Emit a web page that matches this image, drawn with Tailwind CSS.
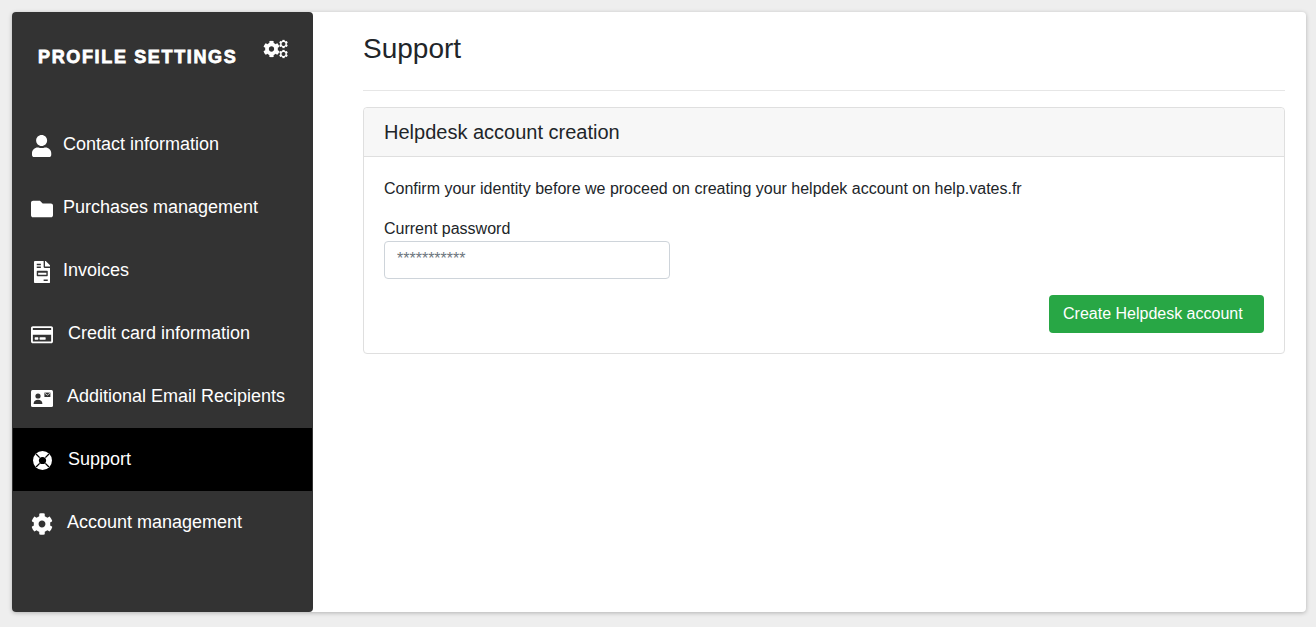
<!DOCTYPE html>
<html lang="en">
<head>
    <meta charset="UTF-8">
    <meta name="viewport" content="width=device-width, initial-scale=1.0">
    <title>Profile settings - Support</title>
    <script src="https://cdn.jsdelivr.net/npm/@tailwindcss/browser@4"></script>
</head>
<body class="bg-[#eeeeee] font-['Liberation_Sans',Arial,sans-serif] text-[#212529] h-[627px] overflow-hidden">

    <svg class="hidden" aria-hidden="true">
        <symbol id="cog" viewBox="0 0 512 512">
            <path fill="currentColor" d="M487.4 315.7l-42.6-24.6c4.3-23.2 4.3-47 0-70.2l42.6-24.6c4.9-2.8 7.1-8.6 5.5-14-11.1-35.6-30-67.8-54.7-94.6-3.8-4.1-10-5.1-14.8-2.3L380.8 110c-17.9-15.4-38.5-27.3-60.8-35.1V25.8c0-5.6-3.9-10.5-9.4-11.7-36.7-8.2-74.3-7.8-109.2 0-5.5 1.2-9.4 6.1-9.4 11.7V75c-22.2 7.9-42.8 19.8-60.8 35.1L88.7 85.5c-4.9-2.8-11-1.9-14.8 2.3-24.7 26.7-43.6 58.9-54.7 94.6-1.7 5.4.6 11.2 5.5 14L67.3 221c-4.3 23.2-4.3 47 0 70.2l-42.6 24.6c-4.9 2.8-7.1 8.6-5.5 14 11.1 35.6 30 67.8 54.7 94.6 3.8 4.1 10 5.1 14.8 2.3l42.6-24.6c17.9 15.4 38.5 27.3 60.8 35.1v49.2c0 5.6 3.9 10.5 9.4 11.7 36.7 8.2 74.3 7.8 109.2 0 5.5-1.2 9.4-6.1 9.4-11.7v-49.2c22.2-7.9 42.8-19.8 60.8-35.1l42.6 24.6c4.9 2.8 11 1.9 14.8-2.3 24.7-26.7 43.6-58.9 54.7-94.6 1.5-5.5-.7-11.3-5.6-14.1zM256 336c-44.1 0-80-35.9-80-80s35.9-80 80-80 80 35.9 80 80-35.9 80-80 80z"/>
        </symbol>
    </svg>

    <div class="p-3 h-[627px]">
        <div class="flex h-[600px] w-[1294px] bg-white rounded shadow-[0_1px_4px_rgba(0,0,0,0.25)]">

            <!-- sidebar -->
            <aside class="w-[301px] shrink-0 bg-[#333333] rounded text-white">
                <div class="h-[101px] flex items-start">
                    <h2 class="ml-[26px] mt-[34px] text-[18px] leading-[22px] font-bold tracking-[1.65px] whitespace-nowrap [-webkit-text-stroke:0.8px_white]">PROFILE SETTINGS</h2>
                    <svg class="ml-[26px] mt-[27px] w-[25px] h-[20px]" viewBox="0 0 25 20">
                        <use href="#cog" x="0" y="1.5" width="17" height="17"/>
                        <use href="#cog" x="16" y="0.5" width="9" height="9"/>
                        <circle cx="20.5" cy="5" r="2" fill="#333333"/>
                        <use href="#cog" x="16" y="10.5" width="9" height="9"/>
                        <circle cx="20.5" cy="15" r="2" fill="#333333"/>
                    </svg>
                </div>

                <nav class="text-[18px] leading-[27px]">
                    <a class="flex items-center h-[63px] pl-[19px]">
                        <span class="w-[22px] mr-[10px] mt-[3px] flex justify-center">
                            <svg class="h-[22px]" viewBox="0 0 448 512" fill="currentColor"><path d="M224 256c70.7 0 128-57.3 128-128S294.7 0 224 0 96 57.3 96 128s57.3 128 128 128zm89.6 32h-16.7c-22.2 10.2-46.9 16-72.9 16s-50.6-5.8-72.9-16h-16.7C60.2 288 0 348.2 0 422.4V464c0 26.5 21.5 48 48 48h352c26.5 0 48-21.5 48-48v-41.6c0-74.2-60.2-134.4-134.4-134.4z"/></svg>
                        </span>
                        Contact information
                    </a>
                    <a class="flex items-center h-[63px] pl-[19px]">
                        <span class="w-[22px] mr-[10px] mt-[3px] flex justify-center">
                            <svg class="h-[22px]" viewBox="0 0 512 512" fill="currentColor"><path d="M464 128H272l-64-64H48C21.49 64 0 85.49 0 112v288c0 26.51 21.49 48 48 48h416c26.51 0 48-21.49 48-48V176c0-26.51-21.49-48-48-48z"/></svg>
                        </span>
                        Purchases management
                    </a>
                    <a class="flex items-center h-[63px] pl-[19px]">
                        <span class="w-[22px] mr-[10px] mt-[3px] flex justify-center">
                            <svg class="h-[22px]" viewBox="0 0 384 512" fill="currentColor"><path fill-rule="evenodd" d="M377 105L279.1 7c-4.5-4.5-10.6-7-17-7H256v128h128v-6.1c0-6.3-2.5-12.4-7-16.9zM224 0H24C10.7 0 0 10.7 0 24v464c0 13.3 10.7 24 24 24h336c13.3 0 24-10.7 24-24V160H248c-13.2 0-24-10.8-24-24zM64 64h96v32H64zM64 128h96v32H64zM224 432h96v32h-96zM80 224h224c8.8 0 16 7.2 16 16v96c0 8.8-7.2 16-16 16H80c-8.8 0-16-7.2-16-16v-96c0-8.8 7.2-16 16-16zM96 272v48h192v-48z"/></svg>
                        </span>
                        Invoices
                    </a>
                    <a class="flex items-center h-[63px] pl-[19px]">
                        <span class="w-[22px] mr-[15px] mt-[3px] flex justify-center">
                            <svg class="w-[22px]" viewBox="0 0 576 512" fill="currentColor"><path d="M527.9 32H48.1C21.5 32 0 53.5 0 80v352c0 26.5 21.5 48 48.1 48h479.8c26.6 0 48.1-21.5 48.1-48V80c0-26.5-21.5-48-48.1-48zM54.1 80h467.8c3.3 0 6 2.7 6 6v42H48.1V86c0-3.3 2.7-6 6-6zm467.8 352H54.1c-3.3 0-6-2.7-6-6V256h479.8v170c0 3.3-2.7 6-6 6zM192 332v40c0 6.6-5.4 12-12 12h-72c-6.6 0-12-5.4-12-12v-40c0-6.6 5.4-12 12-12h72c6.6 0 12 5.4 12 12zm192 0v40c0 6.6-5.4 12-12 12H236c-6.6 0-12-5.4-12-12v-40c0-6.6 5.4-12 12-12h136c6.6 0 12 5.4 12 12z"/></svg>
                        </span>
                        Credit card information
                    </a>
                    <a class="flex items-center h-[63px] pl-[19px]">
                        <span class="w-[22px] mr-[14px] mt-[3px] flex justify-center">
                            <svg class="w-[22px]" viewBox="0 0 22 17"><rect width="22" height="17" rx="1.5" fill="currentColor"/><circle cx="7" cy="6" r="2.6" fill="#333333"/><path d="M2.6 14c0-2.8 2-4.2 4.4-4.2s4.4 1.4 4.4 4.2z" fill="#333333"/><rect x="13.4" y="2.6" width="6" height="4.4" fill="#333333"/><path d="M13.8 3.2l2.6 2 2.6-2" fill="none" stroke="#ffffff" stroke-width="0.7"/></svg>
                        </span>
                        Additional Email Recipients
                    </a>
                    <a class="flex items-center h-[63px] mx-px pl-[18px] bg-black">
                        <span class="w-[22px] mr-[15px] mt-[2px] flex justify-center">
                            <svg class="h-[19px] w-[19px]" viewBox="0 0 20 20">
                                <circle cx="10" cy="10" r="10" fill="currentColor"/>
                                <path d="M3.2 3.2L7 7M16.8 3.2L13 7M3.2 16.8L7 13M16.8 16.8L13 13" stroke="#000000" stroke-width="1.4"/>
                                <circle cx="10" cy="10" r="3.8" fill="#000000"/>
                            </svg>
                        </span>
                        Support
                    </a>
                    <a class="flex items-center h-[63px] pl-[19px]">
                        <span class="w-[22px] mr-[14px] mt-[3px] flex justify-center">
                            <svg class="h-[22px] w-[22px]"><use href="#cog"/></svg>
                        </span>
                        Account management
                    </a>
                </nav>
            </aside>

            <!-- content -->
            <main class="flex-1 pl-[50px] pr-[21px]">
                <h1 class="text-[28px] leading-[34px] pt-[20px] pb-[24px] border-b border-[#e6e6e6] h-[79px]">Support</h1>

                <section class="mt-4 border border-[#dfdfdf] rounded h-[247px]">
                    <h3 class="h-[49px] bg-[#f7f7f7] border-b border-[#dfdfdf] px-5 text-[20px] leading-[48px] rounded-t">Helpdesk account creation</h3>
                    <div class="px-5 pt-[20px]">
                        <p class="text-[16px] leading-[24px]">Confirm your identity before we proceed on creating your helpdek account on help.vates.fr</p>
                        <label class="block mt-[16px] text-[16px] leading-[24px]">Current password</label>
                        <input type="password" placeholder="***********" class="block w-[286px] h-[38px] px-3 pb-[2px] border border-[#ced4da] rounded text-[16px] placeholder:text-[#6c757d] placeholder:opacity-100 outline-none">
                        <div class="flex justify-end mt-[16px]">
                            <button class="w-[215px] h-[38px] pl-[14px] text-left bg-[#28a745] text-white text-[16px] rounded">Create Helpdesk account</button>
                        </div>
                    </div>
                </section>
            </main>
        </div>
    </div>
</body>
</html>
